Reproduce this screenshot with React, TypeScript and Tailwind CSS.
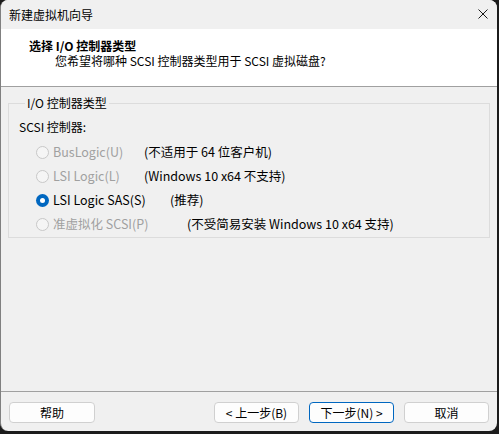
import React from "react";

type Opt = { label: string; note: string; noteX: number; disabled: boolean; checked: boolean };

const options: Opt[] = [
  { label: "BusLogic(U)", note: "(不适用于 64 位客户机)", noteX: 144, disabled: true, checked: false },
  { label: "LSI Logic(L)", note: "(Windows 10 x64 不支持)", noteX: 144, disabled: true, checked: false },
  { label: "LSI Logic SAS(S)", note: "(推荐)", noteX: 170, disabled: false, checked: true },
  { label: "准虚拟化 SCSI(P)", note: "(不受简易安装 Windows 10 x64 支持)", noteX: 187, disabled: true, checked: false },
];

function Radio({ checked, disabled }: { checked: boolean; disabled: boolean }) {
  if (checked) {
    return (
      <span className="flex h-[13px] w-[13px] items-center justify-center rounded-full bg-[#0067c0]">
        <span className="block h-[5px] w-[5px] rounded-full bg-white" />
      </span>
    );
  }
  return (
    <span
      className={
        disabled
          ? "block h-[13px] w-[13px] rounded-full border border-[#c8c8c8] bg-[#f5f5f5]"
          : "block h-[13px] w-[13px] rounded-full border border-[#8a8a8a] bg-white"
      }
    />
  );
}

function Button({ children, primary, className }: { children: React.ReactNode; primary?: boolean; className?: string }) {
  return (
    <button
      className={
        "flex h-[21px] items-center justify-center rounded-[4px] border bg-[#fdfdfd] text-[12px] leading-none text-black " +
        (primary ? "border-[#0067c0] " : "border-[#d0d0d0] ") +
        (className ?? "")
      }
    >
      {children}
    </button>
  );
}

export default function App() {
  return (
    <div
      className="h-[434px] w-[499px] bg-[#1c1c1c]"
      style={{ fontFamily: '"Noto Sans CJK SC", "Noto Sans", sans-serif' }}
    >
      <div className="flex h-[431px] w-[497px] flex-col overflow-hidden rounded-lg border-l border-[#808080] bg-[#f0f0f0]">
        {/* title bar */}
        <div className="flex h-[29px] shrink-0 items-center justify-between bg-[#f0f0f0] pl-[8px] pr-[9px]">
          <span className="text-[12px] leading-none text-black">新建虚拟机向导</span>
          <svg width="10" height="10" viewBox="0 0 10 10" className="mb-[1px]">
            <path d="M0.5 0.5 L9.5 9.5 M9.5 0.5 L0.5 9.5" stroke="#1a1a1a" strokeWidth="1" />
          </svg>
        </div>

        {/* header */}
        <div className="h-[58px] shrink-0 border-b border-[#a0a0a0] bg-white pt-[9px]">
          <p className="pl-[28px] text-[12px] font-bold leading-[15px] text-black">选择 I/O 控制器类型</p>
          <p className="pl-[54px] text-[12px] leading-[15px] text-black">
            您希望将哪种 SCSI 控制器类型用于 SCSI 虚拟磁盘?
          </p>
        </div>

        {/* body */}
        <div className="flex-1 px-[7px] pt-[8px]">
          <fieldset className="border border-[#dcdcdc] pb-[1px] pl-[10px]">
            <legend className="ml-[6px] px-[2px] text-[12px] leading-[16px] text-black">I/O 控制器类型</legend>
            <p className="pt-[8px] text-[12px] leading-[16px] text-black">SCSI 控制器:</p>
            <div className="mt-[5px] flex flex-col">
              {options.map((o) => (
                <div key={o.label} className="relative flex h-[24px] items-center">
                  <span className="ml-[17px] block">
                    <Radio checked={o.checked} disabled={o.disabled} />
                  </span>
                  <span
                    className={
                      "ml-[4px] text-[12.5px] leading-none " + (o.disabled ? "text-[#a0a0a0]" : "text-black")
                    }
                  >
                    {o.label}
                  </span>
                  <span
                    className="absolute text-[12.5px] leading-none text-black"
                    style={{ left: o.noteX - 19 }}
                  >
                    {o.note}
                  </span>
                </div>
              ))}
            </div>
          </fieldset>
        </div>

        {/* footer */}
        <div className="flex h-[40px] shrink-0 items-start border-t border-[#a0a0a0] px-[8px] pt-[10px]">
          <Button className="w-[86px]">帮助</Button>
          <div className="ml-auto flex gap-[10px]">
            <Button className="w-[85px]">&lt; 上一步(B)</Button>
            <Button primary className="w-[85px]">下一步(N) &gt;</Button>
            <Button className="w-[85px]">取消</Button>
          </div>
        </div>
      </div>
    </div>
  );
}
